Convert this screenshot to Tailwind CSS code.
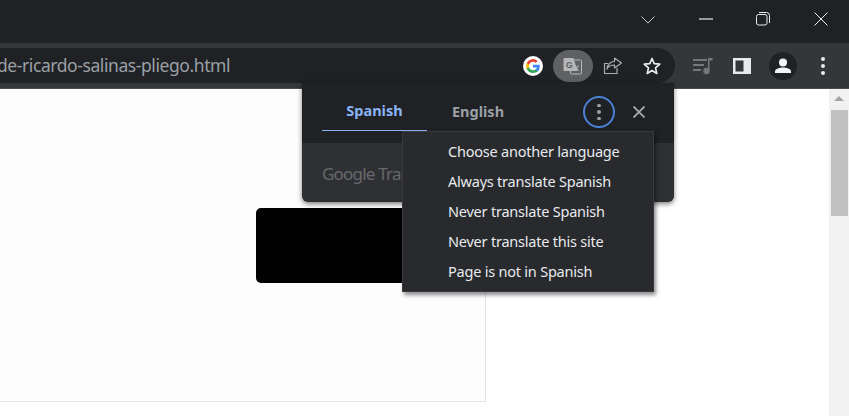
<!DOCTYPE html>
<html lang="en">
  <head>
    <meta charset="UTF-8" />
    <title>Translate popup</title>
    <script src="https://cdn.jsdelivr.net/npm/@tailwindcss/browser@4"></script>
  </head>
  <body class="w-[849px] h-[416px] overflow-hidden bg-white font-['Noto_Sans',sans-serif]">
    <!-- title bar -->
    <div class="h-[43px] bg-[#202124] flex items-center justify-end">
      <svg class="w-[14px] h-[8px] mr-[44px] mt-[-4px]" viewBox="0 0 14 8" fill="none" stroke="#c4c6c9" stroke-width="1"><path d="M0.5 0.5 7 7l6.5-6.5" /></svg>
      <svg class="w-[14px] h-[2px] mr-[43px] mt-[-6px]" viewBox="0 0 14 2" fill="none" stroke="#e8eaed" stroke-width="1.2"><path d="M0 1h14" /></svg>
      <svg class="w-[14px] h-[14px] mr-[44px] mt-[-6px]" viewBox="0 0 14 14" fill="none" stroke="#e8eaed" stroke-width="1"><rect x="0.5" y="2.5" width="10.5" height="10.5" rx="2" /><path d="M3 .5h7.5a3 3 0 0 1 3 3V11" /></svg>
      <svg class="w-[14px] h-[14px] mr-[21px] mt-[-6px]" viewBox="0 0 14 14" fill="none" stroke="#e8eaed" stroke-width="1"><path d="M.5.5l13 13M13.500.5l-13 13" /></svg>
    </div>

    <!-- toolbar -->
    <div class="h-[45px] bg-[#35363a] flex items-center relative">
      <div class="w-[675px] h-[35px] bg-[#202124] rounded-r-[18px] flex items-center justify-between pr-[5px] overflow-hidden">
        <span class="text-[17.500px] tracking-[-0.42px] text-[#9aa0a6] ml-[-3px] whitespace-nowrap">de-ricardo-salinas-pliego.html</span>
        <div class="flex items-center">
          <svg class="w-[20px] h-[20px]" viewBox="0 0 20 20">
            <circle cx="10" cy="10" r="10" fill="#fff" />
            <path fill="#4285f4" d="M16.800 10.200c0-.5 0-1-.1-1.400H10v2.700h3.800a3.300 3.300 0 0 1-1.400 2.100v1.800h2.300c1.300-1.200 2.100-3 2.100-5.200z" />
            <path fill="#34a853" d="M10 17c1.900 0 3.500-.6 4.700-1.700l-2.300-1.800c-.6.400-1.400.7-2.400.7-1.800 0-3.400-1.200-3.900-2.900H3.700v1.800A7 7 0 0 0 10 17z" />
            <path fill="#fbbc05" d="M6.100 11.300a4.200 4.200 0 0 1 0-2.600V6.900H3.700a7 7 0 0 0 0 6.200z" />
            <path fill="#ea4335" d="M10 5.800c1 0 2 .4 2.700 1.100l2-2A7 7 0 0 0 3.700 6.900l2.400 1.800C6.600 7 8.200 5.800 10 5.800z" />
          </svg>
          <div class="w-[40px] h-[32px] ml-[10px] rounded-full bg-[#5f6062] flex items-center justify-center">
            <svg class="w-[20px] h-[20px]" viewBox="0 0 20 20">
              <rect x="7.500" y="4" width="11" height="14" rx="1" fill="#5f6062" stroke="#b4b6b9" stroke-width="1" />
              <path d="M1.500 2h9l4 13h-13a1 1 0 0 1-1-1V3a1 1 0 0 1 1-1z" fill="#b4b6b9" />
              <text x="3" y="11.500" font-size="8.500" font-weight="700" fill="#5f6062" font-family="Liberation Sans">G</text>
              <path d="M12 9l3.500 6M15.500 9l-3.500 6" stroke="#b4b6b9" stroke-width="1" fill="none" />
            </svg>
          </div>
          <svg class="w-[20px] h-[20px] ml-[10px]" viewBox="0 0 20 20" fill="none" stroke="#a9acb0" stroke-width="1.200">
            <path d="M14 12v5.500H1.500V7.500h3.500" />
            <path d="M11.500 2l7 5-7 5V9c-3.500 0-6 1-7.500 4 .2-4 3-7.500 7.500-7.500z" stroke-linejoin="round" />
          </svg>
          <svg class="w-[20px] h-[20px] ml-[19px]" viewBox="0 0 20 20" fill="none" stroke="#e8eaed" stroke-width="1.700">
            <path d="M10 2.500l2.200 5.200 5.600.5-4.300 3.700 1.300 5.500L10 14.500l-4.800 2.900 1.300-5.500-4.300-3.700 5.600-.5z" stroke-linejoin="round" />
          </svg>
          <div class="w-[8px]"></div>
        </div>
      </div>
      <div class="flex items-center ml-[18px]">
        <svg class="w-[20px] h-[18px]" viewBox="0 0 20 18" fill="#75777a">
          <rect x="0" y="2" width="14" height="2" /><rect x="0" y="7" width="11" height="2" /><rect x="0" y="12" width="8" height="2" />
          <circle cx="13.500" cy="14" r="3.200" /><path d="M15 1h4.500v2.500H16.500V14H15z" />
        </svg>
        <svg class="w-[18px] h-[18px] ml-[20px]" viewBox="0 0 18 18"><path fill-rule="evenodd" fill="#e8eaed" d="M0 1h18v16H0zM2.500 3.500v11h8v-11z" /></svg>
        <div class="w-[28px] h-[28px] ml-[18px] rounded-full bg-[#202124] flex items-center justify-center">
          <svg class="w-[18px] h-[18px]" viewBox="0 0 18 18" fill="#f1f3f4"><circle cx="9" cy="5.500" r="4" /><path d="M1 16v-1.500C1 11.500 6 10.500 9 10.500s8 1 8 4V16z" /></svg>
        </div>
        <div class="ml-[24px] flex flex-col gap-[3px]">
          <span class="w-[4px] h-[4px] rounded-full bg-[#e8eaed]"></span>
          <span class="w-[4px] h-[4px] rounded-full bg-[#e8eaed]"></span>
          <span class="w-[4px] h-[4px] rounded-full bg-[#e8eaed]"></span>
        </div>
      </div>
    </div>
    <div class="h-px bg-[#4a4b4e]"></div>

    <!-- page -->
    <div class="relative h-[327px] flex justify-between">
      <div class="w-[486px] h-[313px] bg-[#fdfdfd] border-r border-b border-[#e4e4e4]"></div>
      <div class="w-[20px] h-full bg-[#f1f1f1] pl-[2px] pt-[7px] flex flex-col">
        <div class="w-0 h-0 ml-[3px] border-x-[5px] border-x-transparent border-b-[5px] border-b-[#a3a3a3]"></div>
        <div class="w-[17px] h-[106px] mt-[9px] bg-[#c1c1c1]"></div>
      </div>

      <div class="absolute left-[256px] top-[119px] w-[200px] h-[75px] bg-[#020202] rounded-[5px]"></div>

      <!-- translate bubble -->
      <div class="absolute left-[302px] top-[-6px] w-[372px] h-[119px] rounded-b-[6px] bg-[#2f3033] shadow-[0_2px_5px_rgba(0,0,0,0.5)] overflow-hidden">
        <div class="h-[60px] bg-[#202124] relative">
          <div class="absolute left-[20px] top-0 w-[105px] h-[48px] border-b-[1.500px] border-[#8ab4f8] flex items-center justify-center pt-[9px] text-[14.500px] font-bold text-[#8ab4f8]">Spanish</div>
          <div class="absolute left-[150px] top-[9px] h-[39px] flex items-center text-[14.500px] font-bold text-[#9aa0a6]">English</div>
          <div class="absolute left-[281px] top-[13px] w-[32px] h-[32px] rounded-full border-2 border-[#4a82d6] flex flex-col items-center justify-center gap-[3px]">
            <span class="w-[3.500px] h-[3.500px] rounded-full bg-[#9aa0a6]"></span>
            <span class="w-[3.500px] h-[3.500px] rounded-full bg-[#9aa0a6]"></span>
            <span class="w-[3.500px] h-[3.500px] rounded-full bg-[#9aa0a6]"></span>
          </div>
          <svg class="absolute left-[331px] top-[23px] w-[12px] h-[12px]" viewBox="0 0 12 12" fill="none" stroke="#a9acb0" stroke-width="1.800"><path d="M.5.500l11 11M11.500.500l-11 11" /></svg>
        </div>
        <div class="pl-[20px] pt-[18px] text-[17px] tracking-[-0.8px] text-[#67696d]">Google Translate</div>
      </div>

      <!-- overflow menu -->
      <div class="absolute left-[402px] top-[42px] w-[252px] h-[161px] bg-[#292a2d] border border-[#3a3b3e] shadow-[2px_3px_4px_rgba(0,0,0,0.45)] pl-[45px] pt-[4px] text-[14.500px] tracking-[-0.22px] text-[#e8eaed]">
        <div class="h-[30px] leading-[30px]">Choose another language</div>
        <div class="h-[30px] leading-[30px]">Always translate Spanish</div>
        <div class="h-[30px] leading-[30px]">Never translate Spanish</div>
        <div class="h-[30px] leading-[30px]">Never translate this site</div>
        <div class="h-[30px] leading-[30px]">Page is not in Spanish</div>
      </div>
    </div>
  </body>
</html>
